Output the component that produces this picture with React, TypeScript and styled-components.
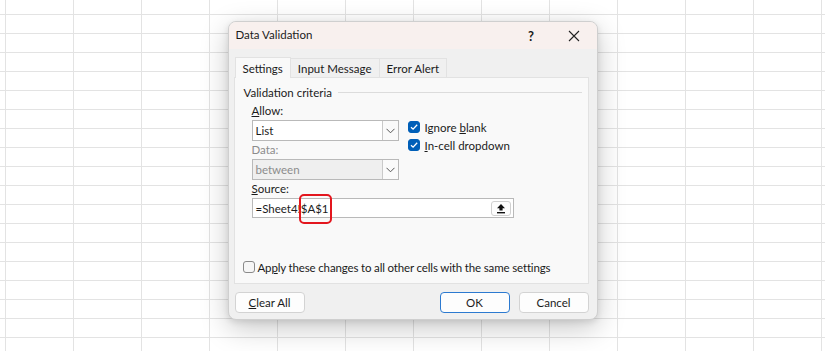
import styled, { createGlobalStyle } from "styled-components";

const GlobalStyle = createGlobalStyle`
  body {
    margin: 0;
    font-family: Lato, "Noto Sans", sans-serif;
    color: #1b1b1b;
  }
`;

function Chevron() {
  return (
    <svg width="9" height="6" viewBox="0 0 9 6">
      <path d="M0.5 0.8 L4.5 4.8 L8.5 0.8" fill="none" stroke="#555" strokeWidth="1" />
    </svg>
  );
}

function Check() {
  return (
    <svg width="10" height="10" viewBox="0 0 10 10">
      <path d="M2 5.2 L4.1 7.2 L8.2 2.8" fill="none" stroke="#fff" strokeWidth="1.3" />
    </svg>
  );
}

function App() {
  return (
    <>
      <GlobalStyle />
      <Sheet>
        <Dialog>
          <TitleBar>
            <Title>Data Validation</Title>
            <TitleButton>?</TitleButton>
            <TitleButton>
              <svg width="12" height="12" viewBox="0 0 12 12">
                <path d="M1 1 L11 11 M11 1 L1 11" stroke="#222" strokeWidth="1.1" />
              </svg>
            </TitleButton>
          </TitleBar>

          <Body>
            <Tabs>
              <Tab $active>Settings</Tab>
              <Tab>Input Message</Tab>
              <Tab>Error Alert</Tab>
            </Tabs>

            <Panel>
              <GroupTitle>
                <span>Validation criteria</span>
                <Rule />
              </GroupTitle>

              <Criteria>
                <Fields>
                  <Label>
                    <u>A</u>llow:
                  </Label>
                  <Select>
                    <SelectValue>List</SelectValue>
                    <SelectArrow>
                      <Chevron />
                    </SelectArrow>
                  </Select>
                  <Label $disabled>Data:</Label>
                  <Select $disabled>
                    <SelectValue>between</SelectValue>
                    <SelectArrow>
                      <Chevron />
                    </SelectArrow>
                  </Select>
                  <Label>
                    <u>S</u>ource:
                  </Label>
                  <SourceInput>
                    <SourceText>
                      =Sheet4!$A$1<Caret />
                    </SourceText>
                    <UploadButton>
                      <svg width="10" height="11" viewBox="0 0 10 11">
                        <path d="M5 1 L1 5.2 H3.4 V7.6 H6.6 V5.2 H9 Z" fill="#111" />
                        <rect x="1" y="9" width="8" height="1.4" fill="#111" />
                      </svg>
                    </UploadButton>
                    <Highlight />
                  </SourceInput>
                </Fields>

                <Options>
                  <CheckRow>
                    <CheckBox $checked>
                      <Check />
                    </CheckBox>
                    <span>
                      Ignore <u>b</u>lank
                    </span>
                  </CheckRow>
                  <CheckRow>
                    <CheckBox $checked>
                      <Check />
                    </CheckBox>
                    <span>
                      <u>I</u>n-cell dropdown
                    </span>
                  </CheckRow>
                </Options>
              </Criteria>

              <ApplyRow>
                <CheckBox />
                <span>
                  Ap<u>p</u>ly these changes to all other cells with the same settings
                </span>
              </ApplyRow>
            </Panel>

            <Footer>
              <Button>
                <u>C</u>lear All
              </Button>
              <Spacer />
              <Button $primary>OK</Button>
              <Button>Cancel</Button>
            </Footer>
          </Body>
        </Dialog>
      </Sheet>
    </>
  );
}

export default App;

const Sheet = styled.div`
  width: 825px;
  height: 351px;
  box-sizing: border-box;
  padding-top: 21px;
  display: flex;
  justify-content: center;
  align-items: flex-start;
  overflow: hidden;
  background-color: #ffffff;
  background-image: linear-gradient(to right, #e3e3e3 1px, transparent 1px),
    linear-gradient(to bottom, #e3e3e3 1px, transparent 1px);
  background-size: 68px 19px;
  background-position: 5px 14px;
`;

const Dialog = styled.div`
  width: 370px;
  height: 299px;
  box-sizing: border-box;
  background: #f0f0f0;
  border: 1px solid #cfcfcf;
  border-radius: 8px;
  box-shadow: 0 8px 28px rgba(0, 0, 0, 0.22), 0 2px 6px rgba(0, 0, 0, 0.1);
  display: flex;
  flex-direction: column;
  overflow: hidden;
`;

const TitleBar = styled.div`
  height: 27px;
  flex-shrink: 0;
  background: #f8f0ee;
  display: flex;
  align-items: center;
  padding-left: 7px;
  padding-right: 1px;
`;

const Title = styled.div`
  flex: 1;
  font-size: 11.5px;
  margin-top: -2px;
`;

const TitleButton = styled.div`
  width: 43px;
  display: flex;
  justify-content: center;
  align-items: center;
  font-size: 13px;
  font-weight: 700;
`;

const Body = styled.div`
  flex: 1;
  display: flex;
  flex-direction: column;
  padding: 8px 8px 7px 5px;
`;

const Tabs = styled.div`
  display: flex;
  align-items: flex-end;
  height: 20px;
  padding-left: 1px;
`;

const Tab = styled.div<{ $active?: boolean }>`
  height: ${(p) => (p.$active ? "21px" : "19px")};
  box-sizing: border-box;
  padding: 0 7px;
  display: flex;
  align-items: center;
  font-size: 11.5px;
  background: ${(p) => (p.$active ? "#f9f9f9" : "#f0f0f0")};
  border: 1px solid #e2e2e2;
  border-bottom: none;
  margin-bottom: ${(p) => (p.$active ? "-1px" : "0")};
  position: relative;
  z-index: ${(p) => (p.$active ? 1 : 0)};
  & + & {
    margin-left: -1px;
  }
`;

const Panel = styled.div`
  height: 207px;
  box-sizing: border-box;
  background: #f9f9f9;
  border: 1px solid #e2e2e2;
  display: flex;
  flex-direction: column;
  padding: 5px 6px 7px 9px;
`;

const GroupTitle = styled.div`
  display: flex;
  align-items: center;
  gap: 6px;
  height: 18px;
  font-size: 11.5px;
`;

const Rule = styled.div`
  flex: 1;
  height: 1px;
  background: #dcdcdc;
`;

const Criteria = styled.div`
  display: flex;
  gap: 9px;
  padding-left: 8px;
  margin-top: 1px;
`;

const Fields = styled.div`
  display: flex;
  flex-direction: column;
  width: 147px;
`;

const Label = styled.div<{ $disabled?: boolean }>`
  height: 18px;
  line-height: 18px;
  font-size: 11.5px;
  color: ${(p) => (p.$disabled ? "#8c8c8c" : "#1b1b1b")};
`;

const Select = styled.div<{ $disabled?: boolean }>`
  height: 21px;
  box-sizing: border-box;
  display: flex;
  border: 1px solid #b9b9b9;
  background: ${(p) => (p.$disabled ? "#efefef" : "#ffffff")};
  color: ${(p) => (p.$disabled ? "#8c8c8c" : "#1b1b1b")};
`;

const SelectValue = styled.div`
  flex: 1;
  font-size: 11.5px;
  line-height: 19px;
  padding-left: 3px;
`;

const SelectArrow = styled.div`
  width: 15px;
  border-left: 1px solid #c9c9c9;
  display: flex;
  align-items: center;
  justify-content: center;
  background: #fafafa;
`;

const SourceInput = styled.div`
  position: relative;
  width: 262px;
  height: 20px;
  box-sizing: border-box;
  border: 1px solid #b9b9b9;
  background: #ffffff;
  display: flex;
  align-items: center;
  padding: 0 2px 0 3px;
`;

const SourceText = styled.div`
  flex: 1;
  font-size: 11.5px;
  display: flex;
  align-items: center;
`;

const Caret = styled.span`
  display: inline-block;
  width: 1px;
  height: 14px;
  margin-left: 1px;
  background: #000;
`;

const UploadButton = styled.div`
  width: 20px;
  height: 15px;
  box-sizing: border-box;
  border: 1px solid #d0d0d0;
  border-radius: 3px;
  background: #fdfdfd;
  display: flex;
  align-items: center;
  justify-content: center;
`;

const Highlight = styled.div`
  position: absolute;
  left: 46px;
  top: -5px;
  width: 33px;
  height: 30px;
  box-sizing: border-box;
  border: 2px solid #e3161e;
  border-radius: 5px;
`;

const Options = styled.div`
  display: flex;
  flex-direction: column;
  padding-top: 16px;
`;

const CheckRow = styled.div`
  display: flex;
  align-items: center;
  gap: 5px;
  height: 18px;
  font-size: 11.5px;
`;

const CheckBox = styled.div<{ $checked?: boolean }>`
  width: 12px;
  height: 12px;
  box-sizing: border-box;
  border-radius: 3px;
  flex-shrink: 0;
  display: flex;
  align-items: center;
  justify-content: center;
  background: ${(p) => (p.$checked ? "#005fb8" : "#f6f6f6")};
  border: 1px solid ${(p) => (p.$checked ? "#005fb8" : "#8a8a8a")};
`;

const ApplyRow = styled.div`
  margin-top: auto;
  margin-left: -1px;
  display: flex;
  align-items: center;
  gap: 3px;
  height: 18px;
  font-size: 11.5px;
  letter-spacing: -0.15px;
  white-space: nowrap;
`;

const Footer = styled.div`
  display: flex;
  gap: 9px;
  margin-top: 8px;
  padding-left: 1px;
`;

const Spacer = styled.div`
  flex: 1;
`;

const Button = styled.div<{ $primary?: boolean }>`
  width: 70px;
  height: 21px;
  box-sizing: border-box;
  border-radius: 4px;
  background: #fdfdfd;
  border: 1px solid ${(p) => (p.$primary ? "#2c7ad0" : "#d3d3d3")};
  display: flex;
  align-items: center;
  justify-content: center;
  font-size: 11.5px;
`;
